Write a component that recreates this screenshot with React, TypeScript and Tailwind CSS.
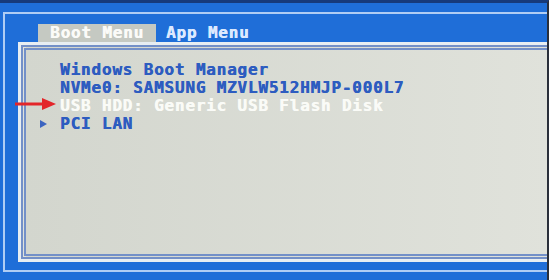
const mono = { fontFamily: '"DejaVu Sans Mono", "Liberation Mono", monospace' };

const rows = [
  { label: "Windows Boot Manager", tone: "text-[#2d5cc0]", sub: false },
  { label: "NVMe0: SAMSUNG MZVLW512HMJP-000L7", tone: "text-[#2d5cc0]", sub: false },
  { label: "USB HDD: Generic USB Flash Disk", tone: "text-[#fafbf7]", sub: false },
  { label: "PCI LAN", tone: "text-[#2d5cc0]", sub: true },
];

export default function App() {
  return (
    <div className="relative w-[553px] h-[280px] bg-white flex overflow-hidden" style={mono}>
      {/* outer blue frame */}
      <div className="w-[549px] h-full bg-[#1f6ed8] border-t-[3px] border-r-2 border-t-[#173a7a] border-r-[#2a2f3a] pl-[3px] pt-[9px] pb-[8px] flex flex-col">
        <div className="flex-1 border-l-2 border-t-2 border-b-2 border-[#b0cdf4] pl-[13px] pt-[10px] pb-[8px] flex flex-col">
          {/* tabs */}
          <div className="h-[18px] flex items-center ml-[20px] font-bold text-[16px] leading-[18px] tracking-[0.8px] [text-shadow:0.5px_0_0_currentColor]">
            <div className="h-full px-[12px] bg-[#c5c9c2] text-[#fbfbf8]">Boot Menu</div>
            <div className="ml-[10px] text-[#dce9ff]">App Menu</div>
          </div>

          {/* content panel */}
          <div className="flex-1 border-[3px] border-r-0 border-[#e8eef2] flex">
            <div className="flex-1 border-[5px] border-r-0 border-double border-[#7390c8] bg-gradient-to-r from-[#d3d6ce] to-[#e0e2db] pt-[11px]">
              {rows.map((r) => (
                <div key={r.label} className="h-[18px] flex items-center font-bold text-[16px] leading-[18px] tracking-[0.8px] [text-shadow:0.5px_0_0_currentColor]">
                  <div className="w-[34px] pl-[14px] flex items-center">
                    {r.sub && (
                      <svg width="7" height="8" viewBox="0 0 7 8">
                        <path d="M0 0 L7 4 L0 8 Z" fill="#3b64c0" />
                      </svg>
                    )}
                  </div>
                  <span className={r.tone}>{r.label}</span>
                </div>
              ))}
            </div>
          </div>
        </div>
      </div>

      {/* red arrow drawn over the photo */}
      <svg className="absolute left-[15px] top-[98px]" width="42" height="12" viewBox="0 0 42 12">
        <path d="M0 4.5 L29 4.5 L29 7.5 L0 7.5 Z" fill="#e3262a" />
        <path d="M27 0 L41 6 L27 12 Z" fill="#e3262a" />
      </svg>
    </div>
  );
}
